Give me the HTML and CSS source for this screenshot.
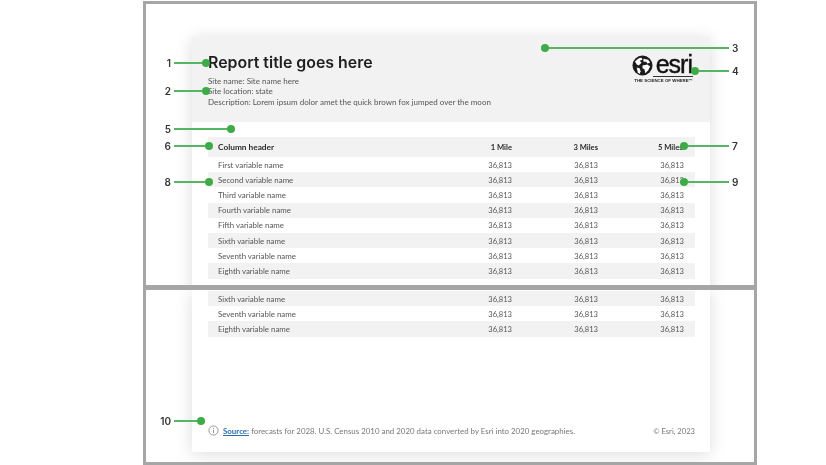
FILE: index.html
```html
<!DOCTYPE html>
<html lang="en">
<head>
<meta charset="utf-8">
<title>Report template anatomy</title>
<link rel="stylesheet" href="styles.css">
</head>
<body>
<main class="stage">
  <section class="frame frame-top">
    <div class="sheet sheet-top">
      <header class="band">
        <div class="band-text">
          <h1 class="title">Report title goes here</h1>
          <p class="meta">Site name: Site name here</p>
          <p class="meta">Site location: state</p>
          <p class="meta">Description: Lorem ipsum dolor amet the quick brown fox jumped over the moon</p>
        </div>
        <div class="logo">
          <div class="logo-main">
            <svg class="globe" viewBox="0 0 22 22" aria-hidden="true">
              <circle cx="11" cy="11" r="10.5" fill="#1c1c1c"/>
              <path d="M3 7c2-2 4-4 7-4l1 2-3 1 2 2-3 3-2-1-1-2z" fill="#fff"/>
              <path d="M12 4l5 1 2 3-3 1-1-2-3 0z" fill="#fff"/>
              <path d="M11 11l5-1 3 2-2 4-3 3-1-4-2-1z" fill="#fff"/>
              <path d="M5 13l3 1 1 3-1 3-2-2z" fill="#fff"/>
            </svg>
            <span class="wordmark">esri</span>
          </div>
          <div class="tagline">THE SCIENCE OF WHERE&#8482;</div>
        </div>
      </header>
      <div class="table">
        <div class="row row-head"><span class="name">Column header</span><span class="num">1 Mile</span><span class="num">3 Miles</span><span class="num">5 Miles</span></div>
        <div class="row"><span class="name">First variable name</span><span class="num">36,813</span><span class="num">36,813</span><span class="num">36,813</span></div>
        <div class="row row-alt"><span class="name">Second variable name</span><span class="num">36,813</span><span class="num">36,813</span><span class="num">36,813</span></div>
        <div class="row"><span class="name">Third variable name</span><span class="num">36,813</span><span class="num">36,813</span><span class="num">36,813</span></div>
        <div class="row row-alt"><span class="name">Fourth variable name</span><span class="num">36,813</span><span class="num">36,813</span><span class="num">36,813</span></div>
        <div class="row"><span class="name">Fifth variable name</span><span class="num">36,813</span><span class="num">36,813</span><span class="num">36,813</span></div>
        <div class="row row-alt"><span class="name">Sixth variable name</span><span class="num">36,813</span><span class="num">36,813</span><span class="num">36,813</span></div>
        <div class="row"><span class="name">Seventh variable name</span><span class="num">36,813</span><span class="num">36,813</span><span class="num">36,813</span></div>
        <div class="row row-alt"><span class="name">Eighth variable name</span><span class="num">36,813</span><span class="num">36,813</span><span class="num">36,813</span></div>
      </div>
    </div>
  </section>
  <section class="frame frame-bottom">
    <div class="sheet sheet-bottom">
      <div class="table">
        <div class="row row-alt"><span class="name">Sixth variable name</span><span class="num">36,813</span><span class="num">36,813</span><span class="num">36,813</span></div>
        <div class="row"><span class="name">Seventh variable name</span><span class="num">36,813</span><span class="num">36,813</span><span class="num">36,813</span></div>
        <div class="row row-alt"><span class="name">Eighth variable name</span><span class="num">36,813</span><span class="num">36,813</span><span class="num">36,813</span></div>
      </div>
      <footer class="foot">
        <svg class="info" viewBox="0 0 12 12" aria-hidden="true">
          <circle cx="6" cy="6" r="5" fill="none" stroke="#777" stroke-width="0.8"/>
          <path d="M6 5.2v3.6M6 3.2v1" stroke="#777" stroke-width="0.9" fill="none"/>
        </svg>
        <p class="source"><a class="source-link">Source:</a> forecasts for 2028. U.S. Census 2010 and 2020 data converted by Esri into 2020 geographies.</p>
        <span class="copy">&#169; Esri, 2023</span>
      </footer>
    </div>
  </section>

  <div class="callout left c1"><b>1</b><i></i><u></u></div>
  <div class="callout left c2"><b>2</b><i></i><u></u></div>
  <div class="callout right c3"><u></u><i></i><b>3</b></div>
  <div class="callout right c4"><u></u><i></i><b>4</b></div>
  <div class="callout left c5"><b>5</b><i></i><u></u></div>
  <div class="callout left c6"><b>6</b><i></i><u></u></div>
  <div class="callout right c7"><u></u><i></i><b>7</b></div>
  <div class="callout left c8"><b>8</b><i></i><u></u></div>
  <div class="callout right c9"><u></u><i></i><b>9</b></div>
  <div class="callout left c10"><b>10</b><i></i><u></u></div>
</main>
</body>
</html>
```
FILE: styles.css
```css
* { box-sizing: border-box; }
html, body { margin: 0; padding: 0; background: #fff; }
body { width: 826px; height: 465px; overflow: hidden; font-family: "Lato", "Liberation Sans", sans-serif; color: #555; }

.stage { position: relative; width: 826px; height: 465px; padding: 1px 0 0 143px; filter: blur(0.35px); }

.frame { width: 614px; border: 3px solid #a6a6a6; overflow: hidden; background: #fff; }
.frame-top { height: 287px; padding: 33px 0 0 46px; }
.frame-bottom { height: 178px; margin-top: -1px; padding: 0 0 0 46px; }

.sheet { width: 518px; background: #fff; box-shadow: 0 2px 16px rgba(0, 0, 0, 0.14); }
.sheet-top { height: 300px; }
.sheet-bottom { height: 162px; display: flex; flex-direction: column; padding-top: 1px; }

.band { height: 85px; background: #f2f2f2; padding: 15px 17px 0 16px; display: flex; justify-content: space-between; }
.title { margin: 0 0 3px; font-family: "Inter", "Liberation Sans", sans-serif; font-size: 15.9px; line-height: 21px; font-weight: 600; color: #1f1f1f; }
.meta { margin: 0; font-size: 8px; line-height: 10.3px; color: #555; }

.logo { display: flex; flex-direction: column; align-items: flex-end; margin-top: 1px; }
.logo-main { display: flex; align-items: center; gap: 0; }
.globe { width: 21px; height: 21px; display: block; margin-right: 0; }
.wordmark { font-family: "Liberation Sans", sans-serif; font-size: 25px; line-height: 22px; font-weight: 400; color: #111; letter-spacing: -1px; -webkit-text-stroke: 0.4px #111; border-bottom: 1px solid #333; padding: 0 1px 1px 3px; height: 24px; }
.tagline { font-family: "Liberation Sans", sans-serif; font-weight: 700; font-size: 4.4px; line-height: 6px; color: #222; margin-top: 1px; white-space: nowrap; }

.table { margin: 0 15px 0 16px; }
.sheet-top .table { margin-top: 15px; }
.row { height: 15.2px; display: grid; grid-template-columns: 1fr 86px 86px 86px; align-items: center; padding: 0 11px 0 10px; font-size: 7.6px; color: #555; }
.name { font-size: 7.9px; }
.row-alt { background: #f2f2f2; }
.row-head { height: 20px; background: #f2f2f2; font-weight: 700; color: #2b2b2b; }
.row-head .name { font-size: 8.3px; }
.num { text-align: right; white-space: nowrap; }
.row-head .num:last-child { width: 26px; justify-self: end; overflow: hidden; text-align: left; }

.foot { margin: auto 15px 16px 16px; display: flex; align-items: center; font-size: 7.6px; color: #777; }
.info { width: 11px; height: 11px; margin-right: 4px; flex: none; }
.source { margin: 0; flex: 1; font-size: 7.9px; }
.source-link { color: #2c6fb0; font-weight: 700; text-decoration: underline; }
.copy { white-space: nowrap; }

.callout { position: absolute; display: flex; align-items: center; height: 14px; }
.callout b { font-family: "Inter", "Liberation Sans", sans-serif; font-size: 10px; font-weight: 600; color: #333; white-space: nowrap; }
.callout i { display: block; flex: 1; height: 1.4px; background: #55b560; }
.callout u { display: block; flex: none; width: 8px; height: 8px; border-radius: 50%; background: #3dab47; text-decoration: none; }
.callout.left b { width: 7px; text-align: right; margin-right: 3px; }
.callout.right b { margin-left: 3px; width: 8px; }

.c1 { left: 164px; top: 56px; width: 46px; }
.c2 { left: 164px; top: 84px; width: 46px; }
.c3 { left: 541px; top: 41px; width: 199px; }
.c4 { left: 691px; top: 64px; width: 49px; }
.c5 { left: 164px; top: 122px; width: 71px; }
.c6 { left: 164px; top: 139px; width: 49px; }
.c7 { left: 680px; top: 139px; width: 60px; }
.c8 { left: 164px; top: 175px; width: 49px; }
.c9 { left: 680px; top: 175px; width: 60px; }
.c10 { left: 159px; top: 414px; width: 46px; }
.c10 b { width: 12px !important; }
```
